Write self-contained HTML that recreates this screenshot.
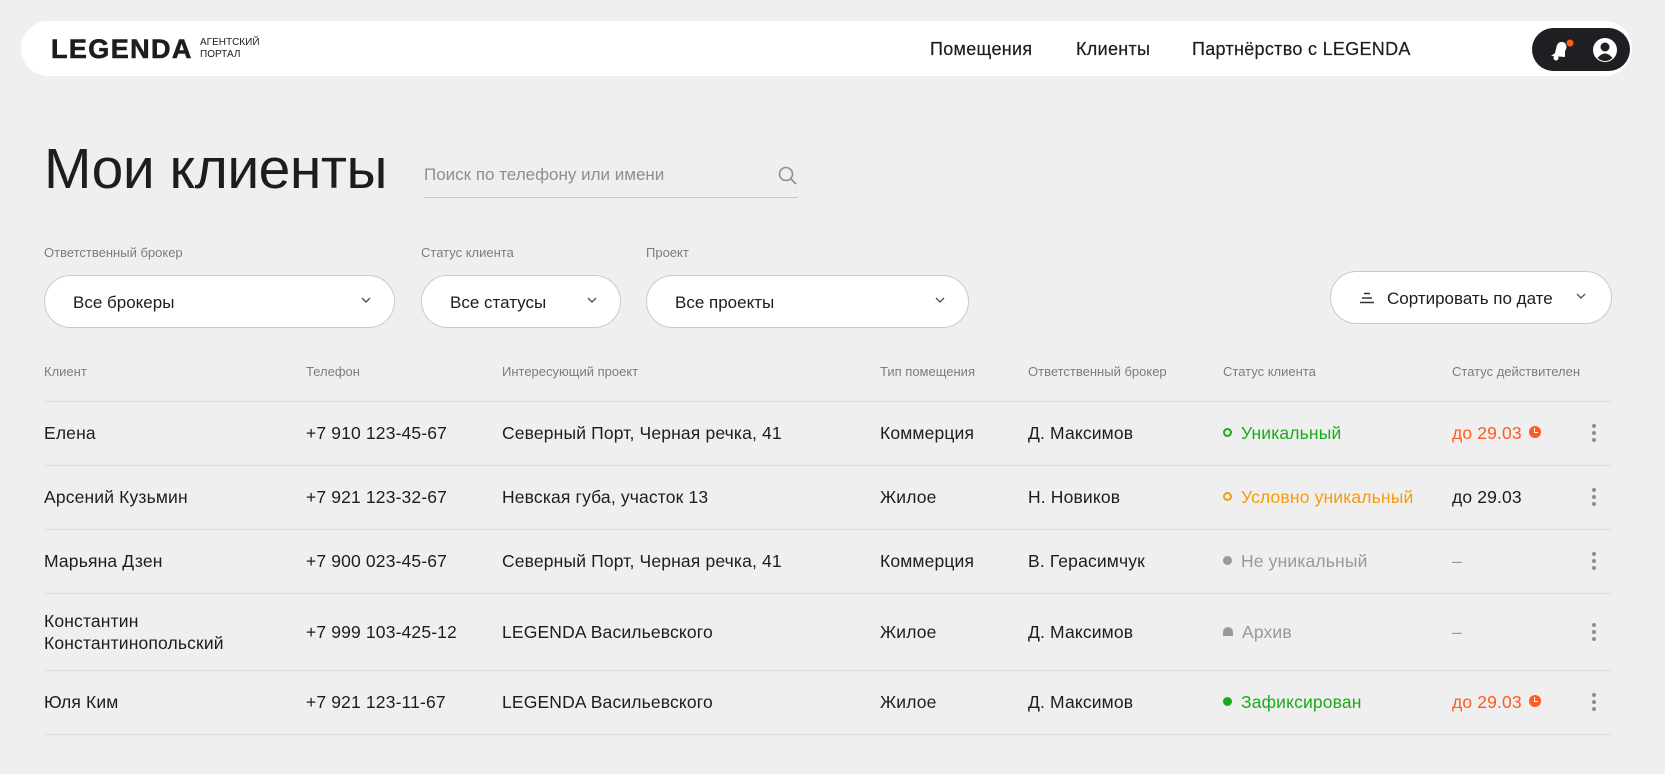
<!DOCTYPE html>
<html><head><meta charset="utf-8"><style>
*{box-sizing:border-box;margin:0;padding:0}
body{width:1665px;height:774px;background:#efefef;font-family:"Liberation Sans",sans-serif;color:#1d1d1f;position:relative;overflow:hidden}
.abs{position:absolute;white-space:nowrap}
.hdr{left:21px;top:21px;width:1611px;height:55px;background:#fff;border-radius:28px}
.logo{left:51px;top:34px;font-weight:bold;font-size:27px;letter-spacing:1.4px;color:#1d1d1f;-webkit-text-stroke:0.6px #1d1d1f}
.sub{left:200px;top:37px;font-size:10px;line-height:12px;color:#1d1d1f}
.nav{top:39px;font-size:18px;letter-spacing:0.3px;-webkit-text-stroke:0.2px #1d1d1f}
.pill{left:1532px;top:28px;width:98px;height:43px;background:#1e1f22;border-radius:22px}
h1{position:absolute;left:44px;top:136px;font-size:57px;font-weight:normal;letter-spacing:-0.5px;white-space:nowrap}
.search{left:424px;top:160px;width:374px;height:38px;border-bottom:1px solid #c7c7cc;font-size:17px;color:#8e8e93;padding-top:5px}
.lbl{top:245px;font-size:13px;color:#7c7c80}
.dd{top:275px;height:53px;border:1px solid #c9c9d3;background:#fff;border-radius:27px;font-size:17px;padding:17px 0 0 28px}
.chev{position:absolute;right:22px;top:20px}
.th{top:364px;font-size:13px;color:#7c7c80}
.line{left:44px;width:1568px;height:1px;background:#dcdcdc}
.c{font-size:17.5px;position:absolute;transform:translateY(-50%);line-height:22px;white-space:nowrap;letter-spacing:0.15px}
.dots{position:absolute;left:1592px;transform:translateY(-50%);width:4px}
.dots i{display:block;width:4px;height:4px;border-radius:2px;background:#8e8e93;margin:3px 0}
.clk{display:inline-block;width:12px;height:12px;background:#ff5a1f;border-radius:50%;vertical-align:1px;position:relative;margin-left:2px}
.clk:after{content:"";position:absolute;left:5px;top:2px;width:3px;height:4px;border-left:1.5px solid #fff;border-bottom:1.5px solid #fff}
</style></head><body>
<div class="abs hdr"></div>
<div class="abs logo">LEGENDA</div>
<div class="abs sub">АГЕНТСКИЙ<br>ПОРТАЛ</div>
<div class="abs nav" style="left:930px">Помещения</div>
<div class="abs nav" style="left:1076px">Клиенты</div>
<div class="abs nav" style="left:1192px">Партнёрство с LEGENDA</div>
<div class="abs pill">
<svg class="abs" style="left:14px;top:10px" width="28" height="24" viewBox="0 0 28 24"><path d="M5 18 L9 15 L11 7 Q14 2 19 5 Q22 9 19 13 L19 19 Z" fill="#fff"/><circle cx="10" cy="20" r="2.5" fill="#fff"/><circle cx="24" cy="5" r="3.5" fill="#ff5a1f"/></svg>
<svg class="abs" style="left:60px;top:9px" width="26" height="26" viewBox="0 0 26 26"><circle cx="13" cy="13" r="12" fill="#fff"/><circle cx="13" cy="10" r="4.5" fill="#1e1f22"/><path d="M5.5 21 Q13 12 20.5 21 Q13 27 5.5 21Z" fill="#1e1f22"/></svg>
</div>
<h1>Мои клиенты</h1>
<div class="abs search">Поиск по телефону или имени
<svg class="abs" style="right:0;top:6px" width="20" height="20" viewBox="0 0 20 20"><circle cx="8" cy="8" r="6.5" fill="none" stroke="#8e8e93" stroke-width="1.6"/><path d="M13 13 L18 18" stroke="#8e8e93" stroke-width="1.6"/></svg></div>
<div class="abs lbl" style="left:44px">Ответственный брокер</div>
<div class="abs lbl" style="left:421px">Статус клиента</div>
<div class="abs lbl" style="left:646px">Проект</div>
<svg width="0" height="0" style="position:absolute"><defs><symbol id="ch" viewBox="0 0 12 8"><path d="M2 2 L6 6 L10 2" fill="none" stroke="#555" stroke-width="1.4"/></symbol></defs></svg>
<div class="abs dd" style="left:44px;width:351px">Все брокеры<svg class="chev" width="12" height="8"><use href="#ch"/></svg></div>
<div class="abs dd" style="left:421px;width:200px">Все статусы<svg class="chev" width="12" height="8"><use href="#ch"/></svg></div>
<div class="abs dd" style="left:646px;width:323px">Все проекты<svg class="chev" width="12" height="8"><use href="#ch"/></svg></div>
<div class="abs dd" style="left:1330px;top:271px;width:282px;padding-left:56px">Сортировать по дате
<svg class="abs" style="left:28px;top:20px" width="16" height="12" viewBox="0 0 16 12"><path d="M5 1.5H11M3 6H13M1 10.5H15" stroke="#333" stroke-width="1.4"/></svg>
<svg class="chev" style="right:24px" width="12" height="8"><use href="#ch"/></svg></div>
<div class="abs th" style="left:44px">Клиент</div>
<div class="abs th" style="left:306px">Телефон</div>
<div class="abs th" style="left:502px">Интересующий проект</div>
<div class="abs th" style="left:880px">Тип помещения</div>
<div class="abs th" style="left:1028px">Ответственный брокер</div>
<div class="abs th" style="left:1223px">Статус клиента</div>
<div class="abs th" style="left:1452px">Статус действителен</div>
<div class="abs line" style="top:401px"></div>
<div class="abs line" style="top:465px"></div>
<div class="abs line" style="top:529px"></div>
<div class="abs line" style="top:593px"></div>
<div class="abs line" style="top:670px"></div>
<div class="abs line" style="top:734px"></div>

<div style="position:absolute;top:433px;left:0">
<div class="c" style="left:44px">Елена</div><div class="c" style="left:306px">+7 910 123-45-67</div><div class="c" style="left:502px">Северный Порт, Черная речка, 41</div><div class="c" style="left:880px">Коммерция</div><div class="c" style="left:1028px">Д. Максимов</div>
<div class="c" style="left:1223px;color:#1aaa1a"><span style="display:inline-block;width:9px;height:9px;border:2px solid #1aaa1a;border-radius:50%;margin-right:9px;vertical-align:2px"></span>Уникальный</div>
<div class="c" style="left:1452px;color:#ff5a1f">до 29.03 <span class="clk"></span></div>
<div class="dots"><i></i><i></i><i></i></div></div>

<div style="position:absolute;top:497px;left:0">
<div class="c" style="left:44px">Арсений Кузьмин</div><div class="c" style="left:306px">+7 921 123-32-67</div><div class="c" style="left:502px">Невская губа, участок 13</div><div class="c" style="left:880px">Жилое</div><div class="c" style="left:1028px">Н. Новиков</div>
<div class="c" style="left:1223px;color:#f59c0c"><span style="display:inline-block;width:9px;height:9px;border:2px solid #f59c0c;border-radius:50%;margin-right:9px;vertical-align:2px"></span>Условно уникальный</div>
<div class="c" style="left:1452px">до 29.03</div>
<div class="dots"><i></i><i></i><i></i></div></div>

<div style="position:absolute;top:561px;left:0">
<div class="c" style="left:44px">Марьяна Дзен</div><div class="c" style="left:306px">+7 900 023-45-67</div><div class="c" style="left:502px">Северный Порт, Черная речка, 41</div><div class="c" style="left:880px">Коммерция</div><div class="c" style="left:1028px">В. Герасимчук</div>
<div class="c" style="left:1223px;color:#98989e"><span style="display:inline-block;width:9px;height:9px;background:#98989e;border-radius:50%;margin-right:9px;vertical-align:2px"></span>Не уникальный</div>
<div class="c" style="left:1452px;color:#98989e">–</div>
<div class="dots"><i></i><i></i><i></i></div></div>

<div style="position:absolute;top:632px;left:0">
<div class="c" style="left:44px">Константин<br>Константинопольский</div><div class="c" style="left:306px">+7 999 103-425-12</div><div class="c" style="left:502px">LEGENDA Васильевского</div><div class="c" style="left:880px">Жилое</div><div class="c" style="left:1028px">Д. Максимов</div>
<div class="c" style="left:1223px;color:#98989e"><span style="display:inline-block;width:10px;height:9px;background:#98989e;border-radius:5px 5px 1px 1px;margin-right:9px;vertical-align:2px"></span>Архив</div>
<div class="c" style="left:1452px;color:#98989e">–</div>
<div class="dots"><i></i><i></i><i></i></div></div>

<div style="position:absolute;top:702px;left:0">
<div class="c" style="left:44px">Юля Ким</div><div class="c" style="left:306px">+7 921 123-11-67</div><div class="c" style="left:502px">LEGENDA Васильевского</div><div class="c" style="left:880px">Жилое</div><div class="c" style="left:1028px">Д. Максимов</div>
<div class="c" style="left:1223px;color:#1aaa1a"><span style="display:inline-block;width:9px;height:9px;background:#1aaa1a;border-radius:50%;margin-right:9px;vertical-align:2px"></span>Зафиксирован</div>
<div class="c" style="left:1452px;color:#ff5a1f">до 29.03 <span class="clk"></span></div>
<div class="dots"><i></i><i></i><i></i></div></div>
</body></html>
